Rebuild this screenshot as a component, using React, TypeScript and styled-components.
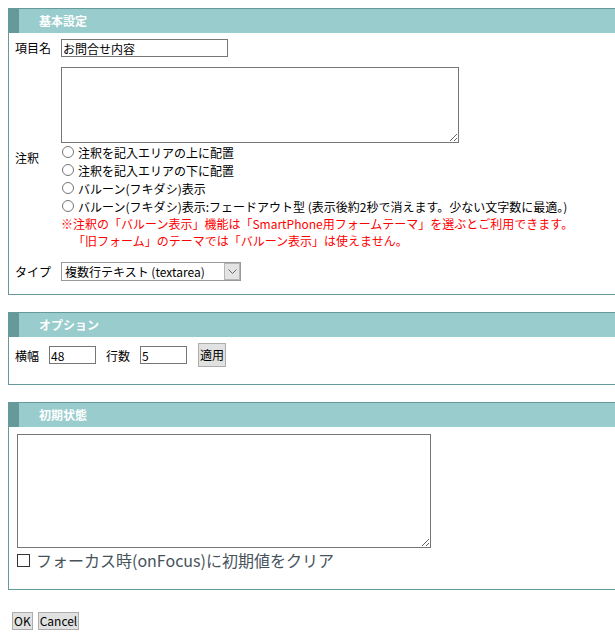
import React from "react"
import styled, { createGlobalStyle } from "styled-components"

const GlobalStyle = createGlobalStyle`
  html, body {
    overflow-x: hidden;
  }
  body {
    margin: 8px 0 8px 8px;
    font-family: "Noto Sans CJK JP", "Liberation Sans", sans-serif;
    font-size: 12px;
    color: #000;
    background: #fff;
  }
`

const Panel = styled.div`
  border: 1px solid #669999;
  border-right: none;
  margin-bottom: 17px;
`

const PanelHeader = styled.div`
  height: 24px;
  line-height: 24px;
  background: #99cccc;
  border-left: 10px solid #669999;
  padding-left: 20px;
  color: #fff;
  font-weight: bold;
  font-size: 12px;
`

const PanelBody = styled.div<{ $pad: string }>`
  padding: ${({ $pad }) => $pad};
`

const Rows = styled.div`
  display: flex;
  flex-direction: column;
  gap: 10px;
`

const Row = styled.div<{ $top?: number }>`
  display: flex;
  align-items: center;
  margin-top: ${({ $top }) => $top ?? 0}px;
`

const Label = styled.div`
  width: 46px;
  flex-shrink: 0;
  line-height: 18px;
`

const Field = styled.div`
  display: flex;
  flex-direction: column;
`

const TextInput = styled.input<{ $w: number }>`
  box-sizing: border-box;
  width: ${({ $w }) => $w}px;
  height: 18px;
  border: 1px solid #767676;
  padding: 0 1px;
  font-family: inherit;
  font-size: 12px;
  line-height: 16px;
  color: #000;
  outline: none;
`

const Area = styled.textarea<{ $w: number; $h: number }>`
  display: block;
  box-sizing: border-box;
  width: ${({ $w }) => $w}px;
  height: ${({ $h }) => $h}px;
  border: 1px solid #767676;
  margin: 0;
  padding: 2px;
  font-family: inherit;
  font-size: 12px;
  resize: both;
  outline: none;
`

const RadioLine = styled.label`
  display: flex;
  align-items: center;
  height: 18px;
  white-space: nowrap;
`

const Radio = styled.input`
  width: 12px;
  height: 12px;
  margin: 0 4px 0 1px;
`

const Note = styled.div<{ $indent?: boolean }>`
  color: #ff0000;
  line-height: 17px;
  white-space: nowrap;
  padding-left: ${({ $indent }) => ($indent ? "12px" : "0")};
`

const SelectBox = styled.div`
  display: flex;
  align-items: stretch;
  box-sizing: border-box;
  width: 180px;
  height: 19px;
  border: 1px solid #999;
  background: #fff;
`

const SelectText = styled.div`
  flex: 1;
  padding-left: 3px;
  line-height: 17px;
  font-size: 12px;
  white-space: nowrap;
`

const SelectArrow = styled.div`
  width: 16px;
  box-sizing: border-box;
  border: 1px solid #b5b5b5;
  background: #e3e3e3;
  display: flex;
  align-items: center;
  justify-content: center;
`

const InlineRow = styled.div`
  display: flex;
  align-items: center;
`

const InlineLabel = styled.span`
  margin-right: 10px;
`

const Spacer = styled.span<{ $w: number }>`
  display: inline-block;
  width: ${({ $w }) => $w}px;
`

const Button = styled.button<{ $h?: number }>`
  box-sizing: border-box;
  height: ${({ $h }) => $h ?? 18}px;
  padding: 0 1px;
  margin: 0;
  border: 1px solid #adadad;
  background: #e1e1e1;
  font-family: inherit;
  font-size: 12px;
  line-height: 1;
  color: #000;
  cursor: pointer;
`

const CheckLine = styled.label`
  display: flex;
  align-items: center;
  margin-top: 2px;
  height: 20px;
  font-size: 16px;
  color: #47535b;
  white-space: nowrap;
`

const CheckBox = styled.input`
  appearance: none;
  width: 13px;
  height: 13px;
  margin: 0 6px 0 0;
  border: 1px solid #333;
  background: #fff;
  box-sizing: border-box;
`

const Footer = styled.div`
  display: flex;
  gap: 5px;
  margin: 22px 0 0 4px;
`

export default function App() {
  return (
    <>
      <GlobalStyle />
      <Panel>
        <PanelHeader>基本設定</PanelHeader>
        <PanelBody $pad="6px 0 13px 6px">
          <Rows>
            <Row>
              <Label>項目名</Label>
              <TextInput $w={167} defaultValue="お問合せ内容" />
            </Row>
            <Row>
              <Label>注釈</Label>
              <Field>
                <Area $w={398} $h={76} />
                <RadioLine>
                  <Radio type="radio" name="note" />
                  注釈を記入エリアの上に配置
                </RadioLine>
                <RadioLine>
                  <Radio type="radio" name="note" />
                  注釈を記入エリアの下に配置
                </RadioLine>
                <RadioLine>
                  <Radio type="radio" name="note" />
                  バルーン(フキダシ)表示
                </RadioLine>
                <RadioLine>
                  <Radio type="radio" name="note" />
                  バルーン(フキダシ)表示:フェードアウト型 (表示後約2秒で消えます。少ない文字数に最適。)
                </RadioLine>
                <Note>※注釈の「バルーン表示」機能は「SmartPhone用フォームテーマ」を選ぶとご利用できます。</Note>
                <Note $indent>「旧フォーム」のテーマでは「バルーン表示」は使えません。</Note>
              </Field>
            </Row>
            <Row $top={3}>
              <Label>タイプ</Label>
              <SelectBox>
                <SelectText>複数行テキスト (textarea)</SelectText>
                <SelectArrow>
                  <svg width="9" height="6" viewBox="0 0 9 6">
                    <path d="M0.5 0.5 L4.5 4.5 L8.5 0.5" fill="none" stroke="#666" strokeWidth="1" />
                  </svg>
                </SelectArrow>
              </SelectBox>
            </Row>
          </Rows>
        </PanelBody>
      </Panel>

      <Panel>
        <PanelHeader>オプション</PanelHeader>
        <PanelBody $pad="6px 0 17px 6px">
          <InlineRow>
            <InlineLabel>横幅</InlineLabel>
            <TextInput $w={47} defaultValue="48" />
            <Spacer $w={10} />
            <InlineLabel>行数</InlineLabel>
            <TextInput $w={47} defaultValue="5" />
            <Spacer $w={11} />
            <Button $h={24}>適用</Button>
          </InlineRow>
        </PanelBody>
      </Panel>

      <Panel>
        <PanelHeader>初期状態</PanelHeader>
        <PanelBody $pad="7px 0 19px 8px">
          <Area $w={414} $h={114} />
          <CheckLine>
            <CheckBox type="checkbox" />
            フォーカス時(onFocus)に初期値をクリア
          </CheckLine>
        </PanelBody>
      </Panel>

      <Footer>
        <Button>OK</Button>
        <Button>Cancel</Button>
      </Footer>
    </>
  )
}
